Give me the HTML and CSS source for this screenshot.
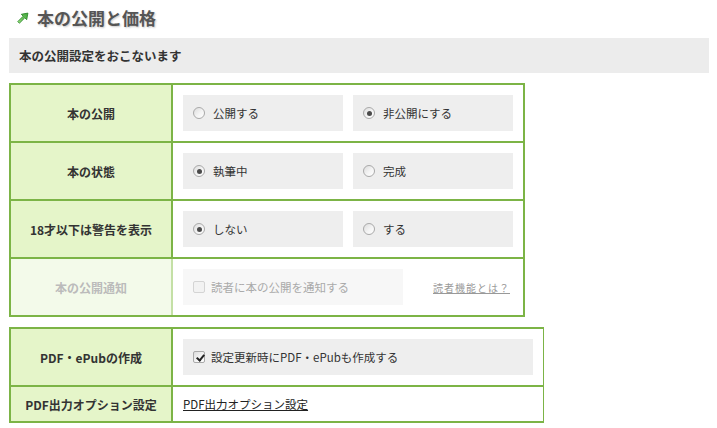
FILE: index.html
```html
<!DOCTYPE html>
<html lang="ja">
<head>
<meta charset="utf-8">
<title>本の公開と価格</title>
<link rel="stylesheet" href="styles.css">
</head>
<body>
<div class="page">
  <h1 class="title">
    <svg class="title-icon" width="12" height="12" viewBox="0 0 12 12" aria-hidden="true">
      <defs>
        <linearGradient id="ag" x1="0" y1="1" x2="1" y2="0">
          <stop offset="0" stop-color="#9be07f"/>
          <stop offset="1" stop-color="#3fa53a"/>
        </linearGradient>
      </defs>
      <path d="M0.8 9.6 L6.2 4.2 L4.3 2.3 L10.9 1.1 L9.7 7.7 L7.8 5.8 L2.4 11.2 Z" fill="url(#ag)" stroke="#2f8a2c" stroke-width="0.9" stroke-linejoin="round"/>
    </svg>
    <span class="title-text">本の公開と価格</span>
  </h1>

  <div class="bar">本の公開設定をおこないます</div>

  <div class="opts opts-main">
    <div class="label">本の公開</div>
    <div class="cell">
      <label class="choice"><input class="radio" type="radio" name="pub"><span>公開する</span></label>
      <label class="choice"><input class="radio" type="radio" name="pub" checked><span>非公開にする</span></label>
    </div>

    <div class="label">本の状態</div>
    <div class="cell">
      <label class="choice"><input class="radio" type="radio" name="state" checked><span>執筆中</span></label>
      <label class="choice"><input class="radio" type="radio" name="state"><span>完成</span></label>
    </div>

    <div class="label">18才以下は警告を表示</div>
    <div class="cell">
      <label class="choice"><input class="radio" type="radio" name="age" checked><span>しない</span></label>
      <label class="choice"><input class="radio" type="radio" name="age"><span>する</span></label>
    </div>

    <div class="label label-off">本の公開通知</div>
    <div class="cell">
      <label class="choice choice-wide choice-off"><input class="check" type="checkbox" disabled><span>読者に本の公開を通知する</span></label>
      <a class="help-link" href="#">読者機能とは？</a>
    </div>
  </div>

  <div class="opts opts-pdf">
    <div class="label">PDF・ePubの作成</div>
    <div class="cell">
      <label class="choice choice-full"><input class="check" type="checkbox" checked><span>設定更新時にPDF・ePubも作成する</span></label>
    </div>

    <div class="label label-short">PDF出力オプション設定</div>
    <div class="cell cell-short">
      <a class="plain-link" href="#">PDF出力オプション設定</a>
    </div>
  </div>
</div>
</body>
</html>
```

FILE: styles.css
```css
* { box-sizing: border-box; }

html, body {
  margin: 0;
  padding: 0;
  background: #ffffff;
}

body {
  font-family: "Noto Sans CJK JP", "Noto Sans", sans-serif;
  color: #333333;
}

.page {
  padding-left: 9px;
  width: 709px;
}

.title {
  margin: 0;
  height: 38px;
  display: flex;
  align-items: center;
  padding-left: 8px;
  padding-bottom: 4px;
  gap: 8px;
  font-size: 17px;
  font-weight: bold;
  color: #555555;
  text-shadow: 1px 1px 2px rgba(0, 0, 0, 0.22);
}

.title-icon {
  display: block;
  flex: none;
  margin-top: 1px;
}

.title-text {
  line-height: 1;
}

.bar {
  height: 35px;
  background: #ececec;
  padding-left: 10px;
  display: flex;
  align-items: center;
  font-size: 12.5px;
  font-weight: bold;
  color: #333333;
  margin-bottom: 10px;
}

.opts {
  display: grid;
  grid-template-columns: 162px 1fr;
  row-gap: 2px;
  background: #7cb446;
  border: 2px solid #7cb446;
}

.opts-main {
  width: 516px;
  margin-bottom: 10px;
}

.opts-pdf {
  width: 535px;
}

.label {
  background: #e5f5c9;
  border-right: 2px solid #7cb446;
  display: flex;
  align-items: center;
  justify-content: center;
  font-size: 12px;
  font-weight: bold;
  color: #333333;
}

.label-off {
  background: #f3faea;
  border-right-color: #c4e0a6;
  color: #bbbbbb;
}

.cell {
  background: #ffffff;
  padding: 10px;
  display: flex;
  align-items: center;
  gap: 10px;
}

.cell-short {
  height: 34px;
  padding-top: 0;
  padding-bottom: 0;
}

.choice {
  width: 160px;
  height: 36px;
  background: #eeeeee;
  display: flex;
  align-items: center;
  padding-left: 10px;
  gap: 8px;
  font-size: 11.5px;
  color: #333333;
}

.choice-wide {
  width: 220px;
  gap: 6px;
}

.choice-full {
  width: 350px;
  gap: 6px;
}

.choice-off {
  background: #f7f7f7;
  color: #aaaaaa;
}

.radio,
.check {
  -webkit-appearance: none;
  appearance: none;
  margin: 0;
  flex: none;
  width: 12px;
  height: 12px;
  border: 1px solid #a9a9a9;
  background: linear-gradient(135deg, #dcdcdc 0%, #f4f4f4 55%, #ffffff 100%);
  position: relative;
}

.radio {
  border-radius: 50%;
}

.radio:checked::after {
  content: "";
  position: absolute;
  left: 2.5px;
  top: 2.5px;
  width: 5px;
  height: 5px;
  border-radius: 50%;
  background: #4a4a4a;
}

.check {
  border-radius: 2px;
}

.check:disabled {
  border-color: #d4d4d4;
  background: #f2f2f2;
}

.check:checked::after {
  content: "";
  position: absolute;
  left: 3.5px;
  top: 0.5px;
  width: 3px;
  height: 6px;
  border: solid #222222;
  border-width: 0 2px 2px 0;
  transform: rotate(40deg);
}

.help-link {
  margin-left: 20px;
  font-size: 10px;
  letter-spacing: 1px;
  color: #999999;
  text-decoration: underline;
}

.plain-link {
  font-size: 11.5px;
  color: #222222;
  text-decoration: underline;
}
```
